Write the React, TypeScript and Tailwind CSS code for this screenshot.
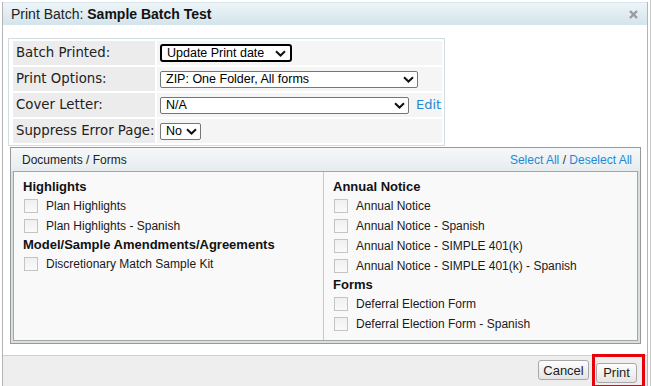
import React from "react";

const Chevron = () => (
  <svg width="11" height="7" viewBox="0 0 11 7" className="shrink-0">
    <path d="M1 1.2 L5.5 5.5 L10 1.2" fill="none" stroke="#111" strokeWidth="2" />
  </svg>
);

function FakeSelect({
  text,
  width,
  focused,
}: {
  text: string;
  width: string;
  focused?: boolean;
}) {
  return (
    <div
      className={
        focused
          ? `${width} h-[18px] border-2 border-black rounded-[3px] bg-white flex items-center justify-between pl-[5px] pr-[4px]`
          : `${width} h-[17px] border border-[#767676] rounded-[2px] bg-white flex items-center justify-between pl-[5px] pr-[3px]`
      }
    >
      <span className="font-['Liberation_Sans',sans-serif] text-[12.5px] leading-none text-black whitespace-nowrap">
        {text}
      </span>
      <Chevron />
    </div>
  );
}

function Check({ label }: { label: string }) {
  return (
    <div className="h-[20px] flex items-center">
      <div className="ml-[1px] w-[14px] h-[14px] border border-[#c4c4c4] bg-gradient-to-b from-[#f0f0f0] to-[#fafafa] shrink-0" />
      <span className="ml-[8px] text-[12px] text-[#1a1a1a] whitespace-nowrap">{label}</span>
    </div>
  );
}

function Heading({ text }: { text: string }) {
  return (
    <div className="h-[18px] leading-[18px] text-[13px] font-bold text-[#111] whitespace-nowrap">{text}</div>
  );
}

export default function App() {
  const labelCls =
    "bg-[#ececec] h-[24px] flex items-center pl-[3px] font-['DejaVu_Sans',sans-serif] text-[13.3px] text-[#222] whitespace-nowrap";
  const valueCls = "bg-[#f5f5f5] h-[24px] flex items-center pl-[3px]";
  return (
    <div className="w-[651px] h-[386px] bg-white relative overflow-hidden flex font-['Liberation_Sans',sans-serif]">
      <div className="w-[2px] shrink-0" />
      <div className="w-[646px] h-[386px] mt-[2px] flex flex-col border-l border-r border-[#b4b4b4] shrink-0">
        {/* Title bar */}
        <div className="h-[23px] shrink-0 bg-gradient-to-b from-[#eef5f8] to-[#d3e4ec] border-t border-[#d9e6eb] flex items-center justify-between pl-[8px] pr-[9px]">
          <div className="text-[14px] text-[#222] whitespace-nowrap">
            Print Batch: <span className="font-bold text-[#111]">Sample Batch Test</span>
          </div>
          <svg width="9" height="9" viewBox="0 0 9 9">
            <path d="M1 1 L8 8 M8 1 L1 8" stroke="#9a9a9a" strokeWidth="2.4" />
          </svg>
        </div>

        {/* Content */}
        <div className="h-[330px] shrink-0 bg-white pt-[13px]">
          <div className="ml-[5px] w-[437px] border border-[#d3dde1] pl-[4px] pr-[2px] py-[2px] grid grid-cols-[142px_285px] gap-[2px]">
            <div className={labelCls}>Batch Printed:</div>
            <div className={valueCls}>
              <FakeSelect text="Update Print date" width="w-[132px]" focused />
            </div>
            <div className={labelCls}>Print Options:</div>
            <div className={valueCls}>
              <FakeSelect text="ZIP: One Folder, All forms" width="w-[258px]" />
            </div>
            <div className={labelCls}>Cover Letter:</div>
            <div className={valueCls}>
              <FakeSelect text="N/A" width="w-[249px]" />
              <span className="ml-[7px] font-['DejaVu_Sans',sans-serif] text-[13px] text-[#1e8ad6]">Edit</span>
            </div>
            <div className={labelCls}>Suppress Error Page:</div>
            <div className={valueCls}>
              <FakeSelect text="No" width="w-[41px]" />
            </div>
          </div>

          {/* Documents panel */}
          <div className="ml-[7px] mt-[1px] w-[631px] border border-[#999] bg-[#d9e0e2] pb-[2px]">
            <div className="h-[23px] bg-gradient-to-b from-[#f6f8f9] to-[#e6ecee] flex items-center justify-between pl-[11px] pr-[8px]">
              <span className="text-[12px] text-[#222]">Documents / Forms</span>
              <span className="text-[12px] text-[#1e8ad6]">
                Select All <span className="text-[#333]">/</span> Deselect All
              </span>
            </div>
            <div className="mx-[2px] border border-[#a5a5a5] bg-[#f9f9f9] grid grid-cols-[310px_1fr]">
              <div className="border-r border-[#c8c8c8] pl-[9px] pt-[6px] pb-[6px]">
                <Heading text="Highlights" />
                <Check label="Plan Highlights" />
                <Check label="Plan Highlights - Spanish" />
                <Heading text="Model/Sample Amendments/Agreements" />
                <Check label="Discretionary Match Sample Kit" />
              </div>
              <div className="pl-[9px] pt-[6px] pb-[6px]">
                <Heading text="Annual Notice" />
                <Check label="Annual Notice" />
                <Check label="Annual Notice - Spanish" />
                <Check label="Annual Notice - SIMPLE 401(k)" />
                <Check label="Annual Notice - SIMPLE 401(k) - Spanish" />
                <Heading text="Forms" />
                <Check label="Deferral Election Form" />
                <Check label="Deferral Election Form - Spanish" />
              </div>
            </div>
          </div>
        </div>

        {/* Footer */}
        <div className="flex-1 bg-[#eeeeee] border-t border-[#cfcfcf] flex items-start justify-end pt-[4px] pr-[10px] gap-[7px]">
          <button className="w-[51px] h-[20px] border border-[#a8a8a8] rounded-[3px] bg-gradient-to-b from-[#fdfdfd] to-[#e4e4e4] text-[13px] text-[#222] leading-none">
            Cancel
          </button>
          <div className="relative">
            <button className="w-[41px] h-[20px] border border-[#a8a8a8] rounded-[3px] bg-gradient-to-b from-[#fdfdfd] to-[#e4e4e4] text-[13px] text-[#222] leading-none">
              Print
            </button>
            <div className="absolute left-[-4px] top-[-6px] w-[53px] h-[34px] border-[3px] border-[#e8000b] pointer-events-none" />
          </div>
        </div>
      </div>
      <div className="w-[2px] shrink-0" />
      <div className="w-px h-full bg-[#c8c8c8] shrink-0" />
    </div>
  );
}
